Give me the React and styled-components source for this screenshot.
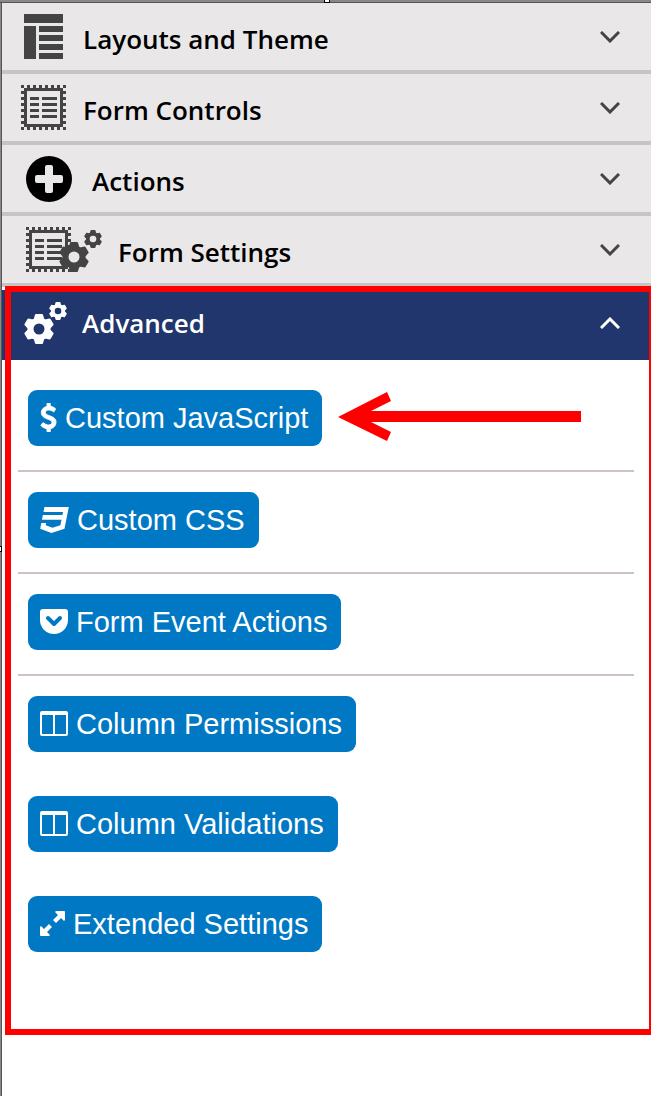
import React from "react";
import styled, { createGlobalStyle } from "styled-components";

const stitches = Array.from({ length: 8 }, (_, i) => i * 6);
const rows = [12, 18, 24, 30];

function LayoutIcon() {
  return (
    <svg width="39" height="45" viewBox="0 0 39 45" fill="#444">
      <path d="M0 0h39v9H0zM0 12h12v33H0zM15 12h24v6H15zM15 21h24v6H15zM15 30h24v6H15zM15 39h24v6H15z" />
    </svg>
  );
}

function FormShape() {
  return (
    <>
      {stitches.map((n) => (
        <path
          key={n}
          d={`M${n} 0h3v3h-3zM${n} 42h3v3h-3zM0 ${n}h3v3h-3zM42 ${n}h3v3h-3z`}
        />
      ))}
      <path fillRule="evenodd" d="M3 3h39v39H3zM6 6v33h33V6z" />
      {rows.map((y) => (
        <path key={y} d={`M9 ${y}h9v3H9zM21 ${y}h15v3H21z`} />
      ))}
    </>
  );
}

function FormIcon() {
  return (
    <svg width="45" height="45" viewBox="0 0 45 45" fill="#444">
      <FormShape />
    </svg>
  );
}

function PlusIcon() {
  return (
    <svg width="46" height="46" viewBox="0 0 46 46">
      <circle cx="23" cy="23" r="23" fill="#000" />
      <path
        fill="#e9e7e8"
        d="M21 9h4q2 0 2 2v8h8q2 0 2 2v4q0 2-2 2h-8v8q0 2-2 2h-4q-2 0-2-2v-8h-8q-2 0-2-2v-4q0-2 2-2h8v-8q0-2 2-2z"
      />
    </svg>
  );
}

// six-toothed cog centred on x,y with an outer radius of 15
function Cog({ x, y, scale = 1, color }) {
  return (
    <g transform={`translate(${x} ${y}) scale(${scale})`}>
      <circle r="8.5" fill="none" stroke={color} strokeWidth="6" />
      {[0, 60, 120, 180, 240, 300].map((angle) => (
        <path
          key={angle}
          fill={color}
          transform={`rotate(${angle})`}
          d="M-5.5-9l1.500-5.2q.3-.8 1-.8h6q.7 0 1 .8l1.500 5.2z"
        />
      ))}
    </g>
  );
}

function FormSettingsIcon() {
  return (
    <svg width="77" height="45" viewBox="0 0 77 45" fill="#444">
      <FormShape />
      <circle cx="48" cy="30" r="7" fill="#e9e7e8" />
      <Cog x={48} y={30} color="#444" />
      <Cog x={67} y={12} scale={0.6} color="#444" />
    </svg>
  );
}

function CogsIcon() {
  return (
    <svg width="43" height="42" viewBox="0 0 43 42">
      <Cog x={15} y={27} color="#fff" />
      <Cog x={34} y={9} scale={0.6} color="#fff" />
    </svg>
  );
}

function Chevron({ up }) {
  return (
    <svg width="20" height="12" viewBox="0 0 20 12" fill="none">
      <path
        d={up ? "M1 11l9-9 9 9" : "M1 1l9 9 9-9"}
        stroke="currentColor"
        strokeWidth="3"
      />
    </svg>
  );
}

function DollarIcon() {
  return (
    <svg
      width="17"
      height="29"
      viewBox="384 0 1024 1792"
      fill="currentColor"
      stroke="currentColor"
      strokeWidth="60"
    >
      <path d="M1362 1185q0 153-99.5 263.5t-258.5 136.5v175q0 14-9 23t-23 9h-135q-13 0-22.5-9.5t-9.5-22.5v-175q-66-9-127.5-31t-101.5-44.5-74-48-46.5-37.5-17.5-18q-17-21-2-41l103-135q7-10 23-12 15-2 24 9l2 2q113 99 243 125 37 8 74 8 81 0 142.5-43t61.5-122q0-28-15-53t-33.5-42-58.5-37.5-66-32-80-32.5q-39-16-61.5-25t-61.5-26.5-62.5-31-56.5-35.5-53.5-42.5-43.5-49-35.5-58-21-66.5-8.5-78q0-138 98-242t255-134v-180q0-13 9.5-22.5t22.5-9.5h135q14 0 23 9t9 23v176q57 6 110.5 23t87 33.5 63.5 37.5 39 29 15 14q17 18 5 38l-81 146q-8 15-23 16-14 3-27-7-3-3-14.5-12t-39-26.5-58.5-32-74.5-26-85.5-11.5q-95 0-155 43t-60 111q0 26 8.5 48t29.5 41.5 39.5 33 56 31 60.5 27 70 27.5q53 20 81 31.5t76 35 75.5 42.5 62 50 53 63.5 31.5 76.5 13 94z" />
    </svg>
  );
}

function CssIcon() {
  return (
    <svg width="29" height="29" viewBox="0 0 1792 1792" fill="currentColor">
      <path d="M275 128h1505l-266 1333-804 267-698-267 71-356h297l-29 147 422 161 486-161 68-339h-1208l58-297h1209l38-191h-1208z" />
    </svg>
  );
}

function PocketIcon() {
  return (
    <svg width="28" height="25" viewBox="0 0 28 25" fill="currentColor">
      <path d="M3 0h22q3 0 3 3v8a14 14 0 0 1-28 0V3q0-3 3-3z" />
      <path
        d="M8 9l6 6 6-6"
        fill="none"
        stroke="#0078c3"
        strokeWidth="4"
        strokeLinecap="round"
        strokeLinejoin="round"
      />
    </svg>
  );
}

function ColumnsIcon() {
  return (
    <svg width="28" height="25" viewBox="0 0 28 25" fill="currentColor">
      <path
        fillRule="evenodd"
        d="M2 0h24q2 0 2 2v21q0 2-2 2H2q-2 0-2-2V2q0-2 2-2zM2 4v19h11V4zM15 4v19h11V4z"
      />
    </svg>
  );
}

function ResizeIcon() {
  return (
    <svg width="25" height="25" viewBox="0 0 25 25" fill="currentColor">
      <path d="M16 0h8q1 0 1 1v8l-1 1-3-3-5 5-3-3 5-5-3-3zM1 15l3 3 5-5 3 3-5 5 3 3-1 1H1q-1 0-1-1v-8z" />
    </svg>
  );
}

const sections = [
  { label: "Layouts and Theme", icon: <LayoutIcon />, inset: 22, gap: 20 },
  { label: "Form Controls", icon: <FormIcon />, inset: 19, gap: 17 },
  { label: "Actions", icon: <PlusIcon />, inset: 24, gap: 20 },
  { label: "Form Settings", icon: <FormSettingsIcon />, inset: 24, gap: 15 },
];

const tools = [
  { label: "Custom JavaScript", icon: <DollarIcon />, ruled: true },
  { label: "Custom CSS", icon: <CssIcon />, ruled: true },
  { label: "Form Event Actions", icon: <PocketIcon />, ruled: true },
  { label: "Column Permissions", icon: <ColumnsIcon /> },
  { label: "Column Validations", icon: <ColumnsIcon /> },
  { label: "Extended Settings", icon: <ResizeIcon /> },
];

export default function App() {
  return (
    <Page>
      <GlobalStyle />
      <Handle $left="calc(50% - 2px)" $top="-3px" />
      <Handle $left="-4px" $top="calc(50% - 2px)" />
      {sections.map(({ label, icon, inset, gap }) => (
        <SectionHeader key={label} $inset={inset} $gap={gap} aria-expanded="false">
          {icon}
          <SectionTitle>{label}</SectionTitle>
          <Chevron />
        </SectionHeader>
      ))}
      <Advanced>
        <AdvancedHeader $inset={22} $gap={15} aria-expanded="true">
          <CogsIcon />
          <SectionTitle>Advanced</SectionTitle>
          <Chevron up />
        </AdvancedHeader>
        <ToolList>
          {tools.map(({ label, icon, ruled }) => (
            <ToolItem key={label} $ruled={ruled}>
              <ToolButton>
                {icon}
                {label}
              </ToolButton>
            </ToolItem>
          ))}
        </ToolList>
        <Highlight />
        <Arrow viewBox="0 0 244 50" aria-hidden="true">
          <path d="M0 25L49 0l4 9-20 10h210v11H33l20 10-4 9z" fill="#f00" />
        </Arrow>
      </Advanced>
    </Page>
  );
}

const GlobalStyle = createGlobalStyle`
  * {
    box-sizing: border-box;
  }
  body {
    margin: 0;
    background: #fff;
  }
`;

const Page = styled.main`
  position: relative;
  min-height: 100vh;
  overflow: hidden;
  padding: 3px 0 0 2px;
  background: linear-gradient(#888 2px, #555 2px 3px, transparent 3px),
    linear-gradient(to right, #888 1px, #555 1px 2px, #fff 2px);
`;

const Handle = styled.span`
  position: absolute;
  left: ${(props) => props.$left};
  top: ${(props) => props.$top};
  width: 6px;
  height: 6px;
  border: 1px solid #000;
  background: #fff;
`;

const SectionHeader = styled.button`
  display: flex;
  align-items: center;
  gap: ${(props) => props.$gap}px;
  width: 100%;
  height: 71px;
  padding: 0 31px 0 ${(props) => props.$inset}px;
  border: 0;
  border-bottom: 4px solid #c5c5c5;
  background: #e9e7e8;
  color: #000;
  font: 600 26px "Open Sans", "Noto Sans", sans-serif;
  text-align: left;

  > svg {
    flex: none;
  }
  > svg:last-child {
    color: #444;
  }
`;

const SectionTitle = styled.span`
  flex: 1;
  padding-top: 4px;
`;

const Advanced = styled.section`
  position: relative;
  margin-top: 3px;
  padding-bottom: 59px;
`;

const AdvancedHeader = styled(SectionHeader)`
  height: 70px;
  padding-bottom: 4px;
  border: 0;
  background: #20366c;
  color: #fff;

  > svg:last-child {
    color: #fff;
  }
  > ${SectionTitle} {
    padding-top: 0;
  }
`;

const ToolList = styled.ul`
  margin: 0;
  padding: 10px 17px 0 16px;
  list-style: none;
`;

const ToolItem = styled.li`
  padding: 20px 10px 24px;
  border-bottom: ${(props) => (props.$ruled ? "2px solid #cdc3c4" : "0")};
`;

const ToolButton = styled.button`
  display: flex;
  align-items: center;
  gap: 8px;
  height: 56px;
  padding: 0 14px 0 12px;
  border: 0;
  border-radius: 9px;
  background: #0078c3;
  color: #fff;
  font: 29px "Liberation Sans", Arial, sans-serif;
  white-space: nowrap;

  > svg {
    flex: none;
    margin-bottom: 2px;
  }
`;

const Highlight = styled.div`
  position: absolute;
  inset: -4px 0 0 3px;
  border: 6px solid #f00;
  border-right-width: 2px;
  pointer-events: none;
`;

const Arrow = styled.svg`
  position: absolute;
  left: 336px;
  top: 102px;
  width: 244px;
  height: 50px;
`;
